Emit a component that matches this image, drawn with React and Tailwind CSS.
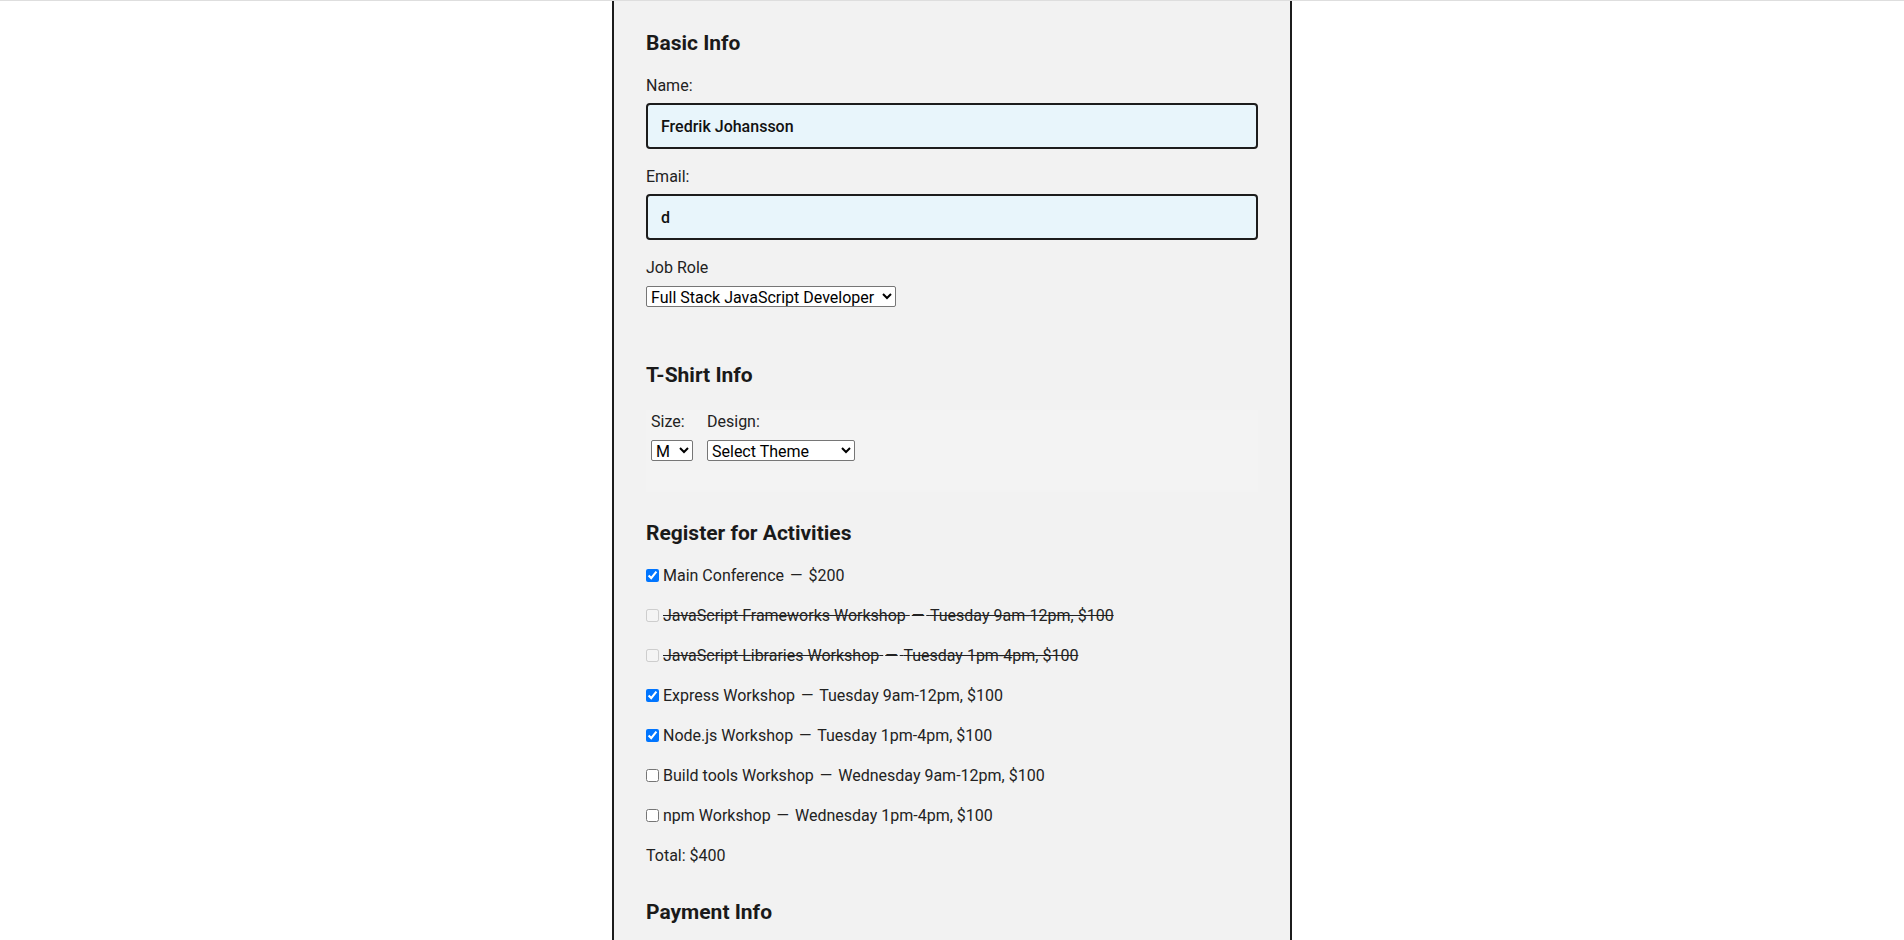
import React, { useState } from 'react';

const activities = [
    { id: 'all', name: 'Main Conference', rest: '$200', checked: true, disabled: false },
    { id: 'js-frameworks', name: 'JavaScript Frameworks Workshop', rest: 'Tuesday 9am-12pm, $100', checked: false, disabled: true },
    { id: 'js-libs', name: 'JavaScript Libraries Workshop', rest: 'Tuesday 1pm-4pm, $100', checked: false, disabled: true },
    { id: 'express', name: 'Express Workshop', rest: 'Tuesday 9am-12pm, $100', checked: true, disabled: false },
    { id: 'node', name: 'Node.js Workshop', rest: 'Tuesday 1pm-4pm, $100', checked: true, disabled: false },
    { id: 'build-tools', name: 'Build tools Workshop', rest: 'Wednesday 9am-12pm, $100', checked: false, disabled: false },
    { id: 'npm', name: 'npm Workshop', rest: 'Wednesday 1pm-4pm, $100', checked: false, disabled: false },
];

const selectCls = "h-[21px] border border-[#767676] rounded-[2px] bg-white text-[16px] leading-[19px] text-black";
const inputCls = "mt-[8px] block w-full h-[46px] border-2 border-[#1c1c1c] rounded-[4px] bg-[#e8f5fb] pl-[13px] text-[16px] font-medium text-[#111] outline-none";
const headCls = "text-[21px] leading-[24px] font-bold text-[#1a1a1a]";

const App = () => {
    const [name, setName] = useState('Fredrik Johansson');
    const [email, setEmail] = useState('d');

    return (
        <div className="min-h-screen bg-white border-t border-[#dedede] font-['Roboto','Liberation_Sans',sans-serif] text-[#222]">
            <form className="mx-auto w-[680px] min-h-[1400px] bg-[#f2f2f2] border-x-2 border-[#1c1c1c] px-8 pt-[30px] pb-10">
                {/* Basic info */}
                <fieldset>
                    <h2 className={headCls}>Basic Info</h2>

                    <label htmlFor="name" className="block mt-[21px] text-[16px] leading-[19px]">Name:</label>
                    <input id="name" type="text" value={name} onChange={(e) => setName(e.target.value)} className={inputCls} />

                    <label htmlFor="mail" className="block mt-[18px] text-[16px] leading-[19px]">Email:</label>
                    <input id="mail" type="email" value={email} onChange={(e) => setEmail(e.target.value)} className={inputCls} />

                    <label htmlFor="title" className="block mt-[18px] text-[16px] leading-[19px]">Job Role</label>
                    <select id="title" defaultValue="full-stack" className={`mt-[9px] block w-[250px] ${selectCls}`}>
                        <option value="full-stack">Full Stack JavaScript Developer</option>
                        <option value="front-end">Front End Developer</option>
                        <option value="back-end">Back End Developer</option>
                        <option value="designer">Designer</option>
                        <option value="other">Other</option>
                    </select>
                </fieldset>

                {/* T-shirt */}
                <fieldset className="mt-[56px]">
                    <h2 className={headCls}>T-Shirt Info</h2>
                    <div className="mt-[23px] bg-[#f3f3f3] pl-[5px] pt-[2px] pb-[31px] flex gap-[14px]">
                        <div className="flex flex-col w-[42px]">
                            <label htmlFor="size" className="text-[16px] leading-[19px]">Size:</label>
                            <select id="size" defaultValue="M" className={`mt-[9px] w-[42px] ${selectCls}`}>
                                <option value="S">S</option>
                                <option value="M">M</option>
                                <option value="L">L</option>
                                <option value="XL">XL</option>
                            </select>
                        </div>
                        <div className="flex flex-col">
                            <label htmlFor="design" className="text-[16px] leading-[19px]">Design:</label>
                            <select id="design" defaultValue="" className={`mt-[9px] w-[148px] ${selectCls}`}>
                                <option value="">Select Theme</option>
                                <option value="js puns">Theme - JS Puns</option>
                                <option value="heart js">Theme - I ♥ JS</option>
                            </select>
                        </div>
                    </div>
                </fieldset>

                {/* Activities */}
                <fieldset className="mt-[29px]">
                    <h2 className={headCls}>Register for Activities</h2>
                    <div className="mt-[21px] flex flex-col gap-[21px]">
                        {activities.map((a) => (
                            <label
                                key={a.id}
                                className={`flex items-center text-[16px] leading-[19px] ${a.disabled ? 'line-through' : ''}`}
                            >
                                <input
                                    type="checkbox"
                                    name={a.id}
                                    defaultChecked={a.checked}
                                    disabled={a.disabled}
                                    className="w-[13px] h-[13px] mr-[4px] shrink-0"
                                />
                                <span>
                                    {a.name} <span className="px-[2px]">—</span> {a.rest}
                                </span>
                            </label>
                        ))}
                        <p className="text-[16px] leading-[19px]">Total: $400</p>
                    </div>
                </fieldset>

                {/* Payment */}
                <fieldset className="mt-[35px]">
                    <h2 className={headCls}>Payment Info</h2>
                    <label htmlFor="payment" className="block mt-[23px] text-[16px] leading-[19px]">I'm going to pay with:</label>
                    <select id="payment" defaultValue="credit card" className={`mt-[9px] block w-[180px] ${selectCls}`}>
                        <option value="credit card">Credit Card</option>
                        <option value="paypal">PayPal</option>
                        <option value="bitcoin">Bitcoin</option>
                    </select>
                </fieldset>
            </form>
        </div>
    );
};

export default App;
